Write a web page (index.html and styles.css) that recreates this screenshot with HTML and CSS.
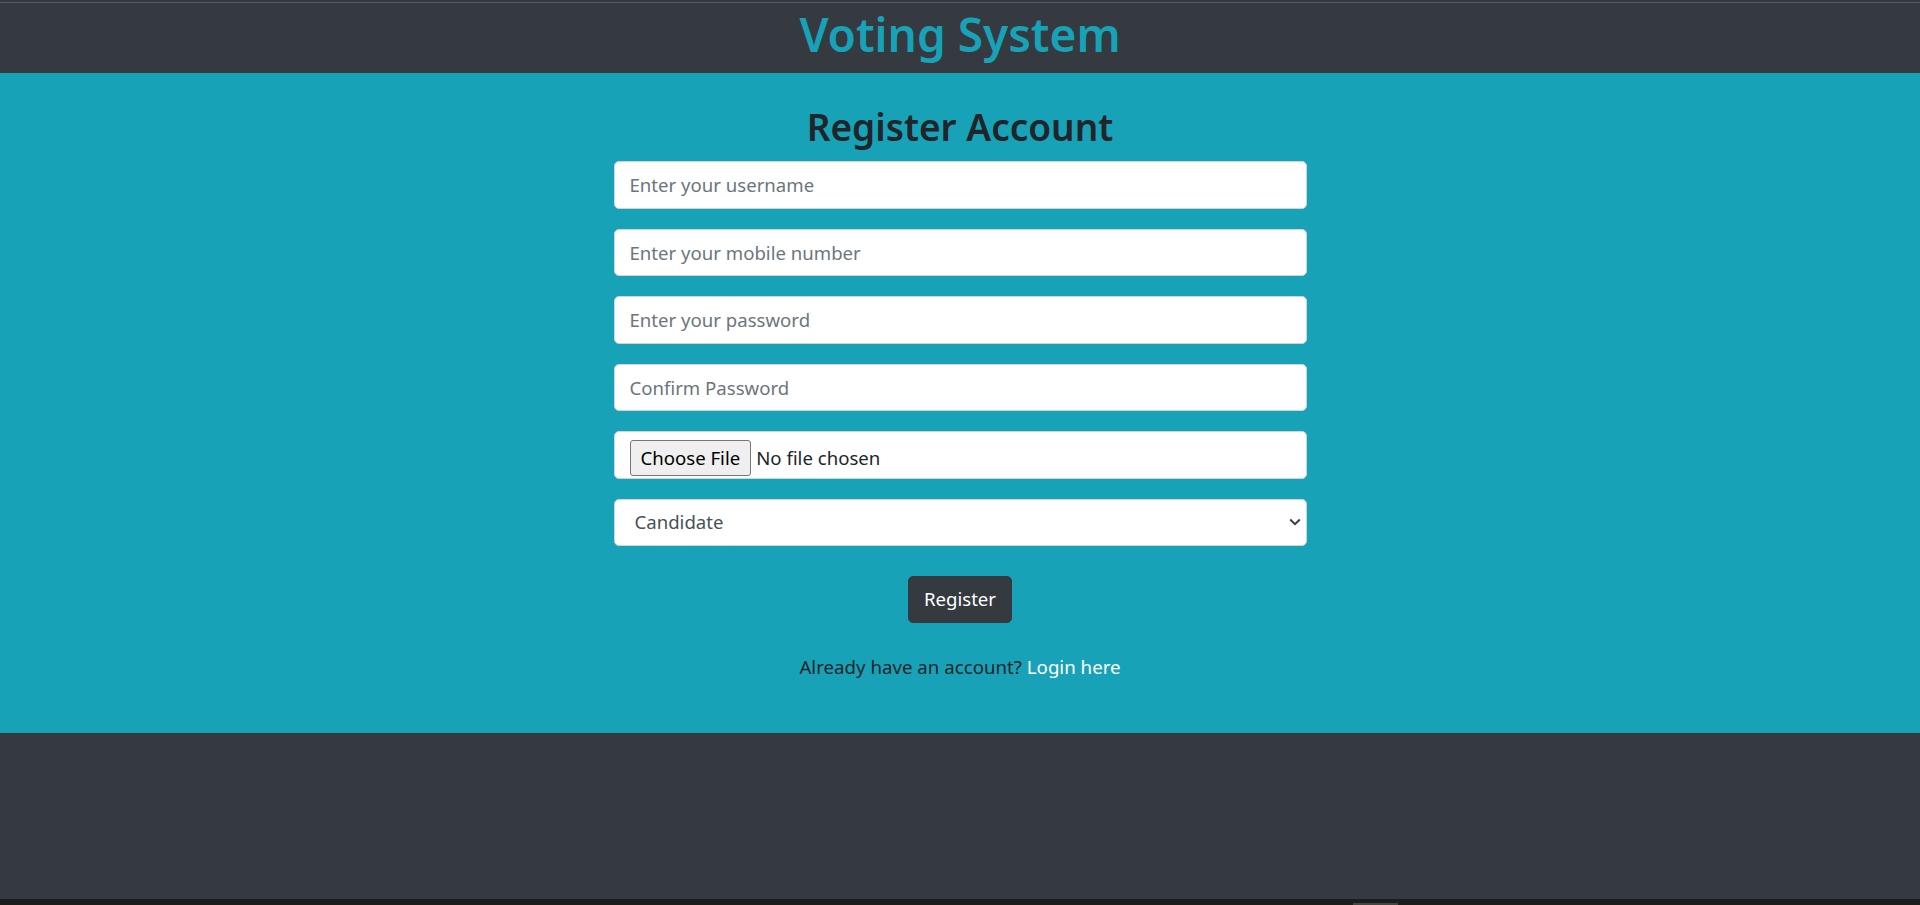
FILE: index.html
```html
<!DOCTYPE html>
<html lang="en">
<head>
<meta charset="utf-8">
<title>Voting System - Register</title>
<link rel="stylesheet" href="styles.css">
</head>
<body>
  <header class="site-header">
    <h1 class="site-title">Voting System</h1>
  </header>
  <main class="register">
    <h2 class="register-title">Register Account</h2>
    <form class="register-form">
      <input class="field" type="text" placeholder="Enter your username">
      <input class="field" type="text" placeholder="Enter your mobile number">
      <input class="field" type="password" placeholder="Enter your password">
      <input class="field" type="password" placeholder="Confirm Password">
      <label class="field file-field">
        <input class="file-input" type="file">
        <span class="file-btn">Choose File</span>
        <span class="file-name">No file chosen</span>
      </label>
      <div class="select-wrap">
        <select class="field select-field">
          <option>Candidate</option>
          <option>Voter</option>
        </select>
        <svg class="chevron" width="12" height="8" viewBox="0 0 12 8" aria-hidden="true">
          <path d="M1.2 1.5 L6 6.2 L10.8 1.5" fill="none" stroke="#3c3f44" stroke-width="2"/>
        </svg>
      </div>
      <button class="btn-register" type="button">Register</button>
    </form>
    <p class="login-text">Already have an account? <a class="login-link" href="#">Login here</a></p>
  </main>
  <div class="filler"></div>
  <div class="taskbar"><span class="taskbar-item"></span></div>
</body>
</html>
```

FILE: styles.css
```css
* { box-sizing: border-box; }

html, body { height: 100%; }

body {
  margin: 0;
  padding-top: 2px;
  background: #343a40;
  font-family: "Noto Sans", "Open Sans", sans-serif;
  color: #212529;
  display: flex;
  flex-direction: column;
  min-height: 100vh;
}

.site-header {
  border-top: 1px solid #5a5b5d;
  background: #343a40;
  padding: 1px 0 9px;
  text-align: center;
}

.site-title {
  margin: 0;
  font-size: 46px;
  line-height: 60px;
  font-weight: 600;
  color: #17a2b8;
}

.register {
  background: #17a2b8;
  padding: 30px 0 51.5px;
  display: flex;
  flex-direction: column;
  align-items: center;
}

.register-title {
  margin: 0 0 10px;
  font-size: 37px;
  line-height: 48px;
  font-weight: 600;
  color: #212529;
}

.register-form {
  width: 693px;
  display: flex;
  flex-direction: column;
  gap: 20px;
}

.field {
  display: block;
  width: 100%;
  height: 47.5px;
  padding: 7.5px 15px;
  font-family: inherit;
  font-size: 18.6px;
  line-height: 30px;
  color: #495057;
  background: #fff;
  border: 1px solid #ced4da;
  border-radius: 5px;
  outline: none;
}

.field::placeholder { color: #6c757d; opacity: 1; }

.file-field {
  display: flex;
  align-items: flex-start;
  cursor: pointer;
}

.file-input {
  position: absolute;
  width: 1px;
  height: 1px;
  opacity: 0;
  overflow: hidden;
}

.file-btn {
  flex: none;
  height: 36px;
  padding: 0 10px;
  margin-right: 5px;
  display: flex;
  align-items: center;
  background: #efefef;
  border: 1px solid #767676;
  border-radius: 3px;
  color: #000;
  font-size: 18.6px;
}

.file-name {
  line-height: 36px;
  color: #212529;
  font-size: 18.6px;
}

.select-wrap { position: relative; }

.select-field {
  appearance: none;
  -webkit-appearance: none;
  padding-left: 20px;
  cursor: pointer;
}

.chevron {
  position: absolute;
  right: 6px;
  top: 19px;
  pointer-events: none;
}

.btn-register {
  align-self: center;
  margin-top: 9.5px;
  height: 47.5px;
  padding: 0 15px;
  background: #343a40;
  color: #fff;
  border: 1px solid #343a40;
  border-radius: 5px;
  font-family: inherit;
  font-size: 18.6px;
  line-height: 30px;
  cursor: pointer;
}

.login-text {
  margin: 28.5px 0 0;
  font-size: 18.7px;
  line-height: 30px;
  color: #212529;
}

.login-link {
  color: #fff;
  text-decoration: none;
}

.filler { flex: 1; background: #343a40; }

.taskbar {
  height: 6px;
  background: #1d1d1d;
  position: relative;
}

.taskbar-item {
  position: absolute;
  left: 1353px;
  bottom: 0;
  width: 45px;
  height: 2px;
  background: #454545;
}
```
